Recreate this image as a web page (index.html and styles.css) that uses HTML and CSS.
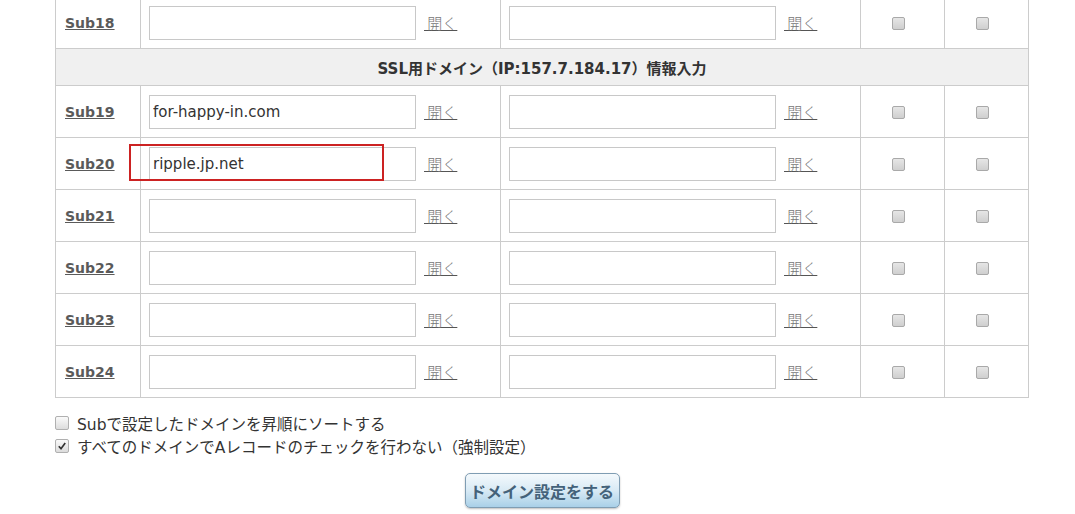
FILE: index.html
```html
<!DOCTYPE html>
<html lang="ja">
<head>
<meta charset="utf-8">
<title>ドメイン設定</title>
<link rel="stylesheet" href="styles.css">
</head>
<body>
<div class="page">
  <table class="domains">
    <colgroup>
      <col class="c-name"><col class="c-dom"><col class="c-dom"><col class="c-chk"><col class="c-chk">
    </colgroup>
    <tbody>
      <tr>
        <td class="name"><a href="#">Sub18</a></td>
        <td class="dom"><input type="text" class="field" value=""><a href="#" class="open">&nbsp;開く</a></td>
        <td class="dom"><input type="text" class="field" value=""><a href="#" class="open">&nbsp;開く</a></td>
        <td class="chk"><input type="checkbox" class="box"></td>
        <td class="chk"><input type="checkbox" class="box"></td>
      </tr>
      <tr class="head">
        <th colspan="5">SSL用ドメイン（IP:157.7.184.17）情報入力</th>
      </tr>
      <tr>
        <td class="name"><a href="#">Sub19</a></td>
        <td class="dom"><input type="text" class="field" value="for-happy-in.com"><a href="#" class="open">&nbsp;開く</a></td>
        <td class="dom"><input type="text" class="field" value=""><a href="#" class="open">&nbsp;開く</a></td>
        <td class="chk"><input type="checkbox" class="box"></td>
        <td class="chk"><input type="checkbox" class="box"></td>
      </tr>
      <tr>
        <td class="name"><a href="#">Sub20</a></td>
        <td class="dom"><input type="text" class="field" value="ripple.jp.net"><a href="#" class="open">&nbsp;開く</a></td>
        <td class="dom"><input type="text" class="field" value=""><a href="#" class="open">&nbsp;開く</a></td>
        <td class="chk"><input type="checkbox" class="box"></td>
        <td class="chk"><input type="checkbox" class="box"></td>
      </tr>
      <tr>
        <td class="name"><a href="#">Sub21</a></td>
        <td class="dom"><input type="text" class="field" value=""><a href="#" class="open">&nbsp;開く</a></td>
        <td class="dom"><input type="text" class="field" value=""><a href="#" class="open">&nbsp;開く</a></td>
        <td class="chk"><input type="checkbox" class="box"></td>
        <td class="chk"><input type="checkbox" class="box"></td>
      </tr>
      <tr>
        <td class="name"><a href="#">Sub22</a></td>
        <td class="dom"><input type="text" class="field" value=""><a href="#" class="open">&nbsp;開く</a></td>
        <td class="dom"><input type="text" class="field" value=""><a href="#" class="open">&nbsp;開く</a></td>
        <td class="chk"><input type="checkbox" class="box"></td>
        <td class="chk"><input type="checkbox" class="box"></td>
      </tr>
      <tr>
        <td class="name"><a href="#">Sub23</a></td>
        <td class="dom"><input type="text" class="field" value=""><a href="#" class="open">&nbsp;開く</a></td>
        <td class="dom"><input type="text" class="field" value=""><a href="#" class="open">&nbsp;開く</a></td>
        <td class="chk"><input type="checkbox" class="box"></td>
        <td class="chk"><input type="checkbox" class="box"></td>
      </tr>
      <tr>
        <td class="name"><a href="#">Sub24</a></td>
        <td class="dom"><input type="text" class="field" value=""><a href="#" class="open">&nbsp;開く</a></td>
        <td class="dom"><input type="text" class="field" value=""><a href="#" class="open">&nbsp;開く</a></td>
        <td class="chk"><input type="checkbox" class="box"></td>
        <td class="chk"><input type="checkbox" class="box"></td>
      </tr>
    </tbody>
  </table>

  <div class="options">
    <label class="opt"><input type="checkbox" class="box small">Subで設定したドメインを昇順にソートする</label>
    <label class="opt"><input type="checkbox" class="box small" checked>すべてのドメインでAレコードのチェックを行わない（強制設定）</label>
  </div>

  <div class="actions">
    <button type="button" class="submit">ドメイン設定をする</button>
  </div>

  <div class="highlight"></div>
</div>
</body>
</html>
```

FILE: styles.css
```css
html, body {
  margin: 0;
  padding: 0;
  background: #ffffff;
}

body {
  font-family: "DejaVu Sans", "Noto Sans CJK JP", sans-serif;
  color: #333333;
}

.page {
  position: relative;
  width: 1075px;
  height: 514px;
  overflow: hidden;
}

.domains {
  margin: -4px 0 0 55px;
  width: 974px;
  border-collapse: collapse;
  table-layout: fixed;
}

.c-name { width: 85px; }
.c-dom { width: 360px; }
.c-chk { width: 84px; }

.domains td,
.domains th {
  border: 1px solid #cccccc;
  padding: 0;
  vertical-align: middle;
}

.domains td {
  height: 51px;
}

.name {
  padding-left: 9px !important;
}

.name a {
  font-family: "DejaVu Sans", sans-serif;
  font-weight: bold;
  font-size: 14px;
  color: #5a5a5a;
  text-decoration: underline;
}

.dom {
  padding-left: 8px !important;
  white-space: nowrap;
}

.field {
  box-sizing: border-box;
  width: 267px;
  height: 34px;
  border: 1px solid #c8c8c8;
  padding: 0 3px;
  margin: 0;
  font-family: "DejaVu Sans", sans-serif;
  font-size: 15px;
  color: #333333;
  vertical-align: middle;
  background: #ffffff;
  outline: none;
}

.open {
  display: inline-block;
  margin-left: 8px;
  font-family: "Noto Sans CJK JP", sans-serif;
  font-size: 15px;
  font-weight: 300;
  color: #777777;
  text-decoration: underline;
  text-decoration-color: #555555;
  vertical-align: middle;
}

.chk {
  text-align: center;
  padding-right: 8px !important;
}

.box {
  appearance: none;
  -webkit-appearance: none;
  box-sizing: border-box;
  width: 13px;
  height: 13px;
  margin: 0;
  border: 1px solid #a9a9a9;
  border-radius: 2px;
  background: linear-gradient(#e6e6e6, #cfcfcf);
  vertical-align: middle;
}

.box.small {
  width: 14px;
  height: 14px;
  background: linear-gradient(#fafafa, #dcdcdc);
  border-color: #b0b0b0;
  margin-right: 8px;
  flex: none;
}

.box.small:checked {
  background-color: #f2f2f2;
  background-image: url("data:image/svg+xml,%3Csvg xmlns='http://www.w3.org/2000/svg' viewBox='0 0 13 13'%3E%3Cpath d='M3 6.8 L5.4 9.4 L10 3.2' fill='none' stroke='%23333' stroke-width='1.8'/%3E%3C/svg%3E"), linear-gradient(#fafafa, #dcdcdc);
}

.domains th {
  height: 36px;
  background: #f0f0f0;
  font-family: "DejaVu Sans", "Noto Sans CJK JP", sans-serif;
  font-size: 15px;
  font-weight: bold;
  color: #333333;
  text-align: center;
}

.options {
  display: flex;
  flex-direction: column;
  margin: 13px 0 0 55px;
}

.opt {
  display: flex;
  align-items: center;
  height: 23px;
  font-family: "DejaVu Sans", "Noto Sans CJK JP", sans-serif;
  font-size: 15.5px;
  color: #333333;
}

.actions {
  display: flex;
  justify-content: center;
  padding-left: 9px;
  margin-top: 16px;
}

.submit {
  box-sizing: border-box;
  width: 155px;
  height: 35px;
  border: 1px solid #7f9db3;
  border-radius: 5px;
  background: linear-gradient(#f4f9fc 0%, #d8eaf5 50%, #a9d0e8 100%);
  box-shadow: 0 1px 2px rgba(0, 0, 0, 0.25);
  font-family: "Noto Sans CJK JP", sans-serif;
  font-size: 16px;
  font-weight: bold;
  color: #44627a;
  padding: 0;
  cursor: pointer;
}

.highlight {
  position: absolute;
  left: 129px;
  top: 144px;
  width: 255px;
  height: 37px;
  box-sizing: border-box;
  border: 2px solid #cc2222;
  pointer-events: none;
}
```
